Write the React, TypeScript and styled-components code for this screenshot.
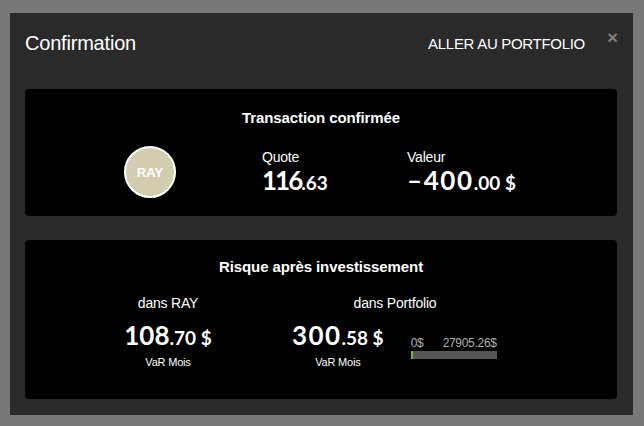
import React from 'react';
import styled, { createGlobalStyle } from 'styled-components';

const GlobalStyle = createGlobalStyle`
  html, body {
    margin: 0;
    padding: 0;
    background: #787878;
  }
  body {
    font-family: "Liberation Sans", Arial, sans-serif;
  }
`;

const Backdrop = styled.div`
  width: 644px;
  height: 426px;
  box-sizing: border-box;
  padding: 13px 11px 11px 10px;
  background: #787878;
`;

const Modal = styled.div`
  position: relative;
  height: 402px;
  box-sizing: border-box;
  padding: 0 16px 16px 15px;
  background: #2a2a2a;
  color: #fff;
  display: flex;
  flex-direction: column;
`;

const Header = styled.div`
  height: 60px;
  display: flex;
  align-items: center;
  justify-content: space-between;
  margin-bottom: 16px;
`;

const Title = styled.h2`
  margin: 0;
  font-size: 20px;
  font-weight: normal;
  letter-spacing: -0.2px;
`;

const GoLink = styled.a`
  font-size: 15px;
  text-transform: uppercase;
  color: #fff;
  text-decoration: none;
  margin-right: 32px;
  letter-spacing: -0.3px;
`;

const Close = styled.span`
  position: absolute;
  top: 15px;
  right: 15px;
  font-size: 19px;
  font-weight: bold;
  color: #7d7d7d;
  line-height: 20px;
`;

const Panel = styled.section<{ $height: number; $top: number }>`
  height: ${(p) => p.$height}px;
  box-sizing: border-box;
  padding-top: ${(p) => p.$top}px;
  background: #000;
  border-radius: 4px;
  & + & {
    margin-top: 24px;
  }
`;

const PanelTitle = styled.h3`
  margin: 0;
  font-size: 15px;
  line-height: 18px;
  font-weight: bold;
  text-align: center;
  letter-spacing: -0.1px;
`;

const TradeRow = styled.div`
  display: flex;
  align-items: flex-start;
  padding-left: 99px;
  margin-top: 19px;
`;

const Badge = styled.div`
  width: 48px;
  height: 48px;
  border-radius: 50%;
  border: 2px solid #fff;
  background: #d3cdaf;
  display: flex;
  align-items: center;
  justify-content: center;
  font-size: 13px;
  font-weight: bold;
  color: #fff;
  margin-right: 86px;
`;

const Stat = styled.div<{ $width?: number }>`
  width: ${(p) => (p.$width ? `${p.$width}px` : 'auto')};
  margin-top: 3px;
`;

const Label = styled.div`
  font-size: 14px;
  line-height: 16px;
  letter-spacing: -0.2px;
`;

const Big = styled.div<{ $spacing?: number }>`
  font-family: Lato, "Liberation Sans", sans-serif;
  font-weight: bold;
  font-size: 26px;
  line-height: 30px;
  letter-spacing: ${(p) => p.$spacing ?? 0}px;
  white-space: nowrap;
`;

const Small = styled.span`
  font-size: 19px;
  letter-spacing: 0;
`;

const RiskGrid = styled.div`
  display: grid;
  grid-template-columns: 140px 206px;
  column-gap: 54px;
  padding-left: 73px;
  margin-top: 19px;
`;

const RiskCol = styled.div`
  display: flex;
  flex-direction: column;
  align-items: center;
`;

const RiskRow = styled.div<{ $center?: boolean }>`
  display: flex;
  align-items: flex-start;
  align-self: stretch;
  justify-content: ${(p) => (p.$center ? 'center' : 'flex-start')};
  gap: 27px;
  margin-top: 9px;
`;

const ValueBlock = styled.div`
  display: flex;
  flex-direction: column;
  align-items: center;
`;

const Caption = styled.div`
  font-size: 11px;
  line-height: 13px;
  margin-top: 3px;
  letter-spacing: -0.2px;
`;

const Gauge = styled.div`
  width: 86px;
  margin-top: 17px;
`;

const GaugeLabels = styled.div`
  display: flex;
  justify-content: space-between;
  font-size: 12px;
  line-height: 12px;
  color: #b0b0b0;
  letter-spacing: -0.3px;
`;

const Track = styled.div`
  height: 8px;
  margin-top: 2px;
  background: #575757;
  border-left: 2px solid #7fb52e;
`;

export default function App() {
  return (
    <>
      <GlobalStyle />
      <Backdrop>
        <Modal>
          <Header>
            <Title>Confirmation</Title>
            <GoLink>Aller au portfolio</GoLink>
          </Header>
          <Close>×</Close>

          <Panel $height={127} $top={20}>
            <PanelTitle>Transaction confirmée</PanelTitle>
            <TradeRow>
              <Badge>RAY</Badge>
              <Stat $width={145}>
                <Label>Quote</Label>
                <Big $spacing={-2}>
                  116<Small>.63</Small>
                </Big>
              </Stat>
              <Stat>
                <Label>Valeur</Label>
                <Big $spacing={1.6}>
                  –400<Small>.00 $</Small>
                </Big>
              </Stat>
            </TradeRow>
          </Panel>

          <Panel $height={159} $top={18}>
            <PanelTitle>Risque après investissement</PanelTitle>
            <RiskGrid>
              <RiskCol>
                <Label>dans RAY</Label>
                <RiskRow $center>
                  <ValueBlock>
                    <Big>
                      108<Small>.70 $</Small>
                    </Big>
                    <Caption>VaR Mois</Caption>
                  </ValueBlock>
                </RiskRow>
              </RiskCol>
              <RiskCol>
                <Label>dans Portfolio</Label>
                <RiskRow>
                  <ValueBlock>
                    <Big $spacing={1.4}>
                      300<Small>.58 $</Small>
                    </Big>
                    <Caption>VaR Mois</Caption>
                  </ValueBlock>
                  <Gauge>
                    <GaugeLabels>
                      <span>0$</span>
                      <span>27905.26$</span>
                    </GaugeLabels>
                    <Track />
                  </Gauge>
                </RiskRow>
              </RiskCol>
            </RiskGrid>
          </Panel>
        </Modal>
      </Backdrop>
    </>
  );
}
